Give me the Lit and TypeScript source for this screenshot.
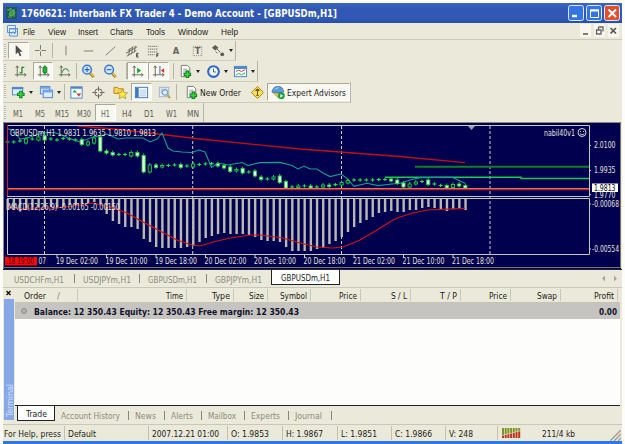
import { LitElement, html, svg, css } from "lit";
import { customElement, property } from "lit/decorators.js";
import { classMap } from "lit/directives/class-map.js";

/** Text squeezed to a given width, like the bitmap fonts of the old desktop */
const label = (text: string, width: number, cls = "") => html`
  <svg class="label ${cls}" width=${width} height="12">
    <text x="0" y="9.5" textLength=${width} lengthAdjust="spacingAndGlyphs">${text}</text>
  </svg>
`;

const labelStyles = css`
  .label {
    display: block;
    flex: none;
    overflow: visible;
    font: 9px "DejaVu Sans Condensed", "DejaVu Sans", sans-serif;
    fill: #1c1c18;
  }
  .label.bold {
    font-weight: bold;
    fill: #101028;
  }
  .label.dim {
    fill: #8b8b80;
  }
  .label.period {
    font-size: 8.5px;
    fill: #5c5c54;
  }
`;

const plus = (x: number, y: number) => svg`
  <path d="M${x - 4} ${y}H${x + 4}M${x} ${y - 4}V${y + 4}" stroke="#0a7a14" stroke-width="3.6" />
  <path d="M${x - 3} ${y}H${x + 3}M${x} ${y - 3}V${y + 3}" stroke="#35d63c" stroke-width="1.8" />`;

const axes = svg`<path d="M4.5 2V13.5M2 11.500H14" stroke="#66665e" />
  <path d="M3 4L4.500 2L6 4M12 10L14 11.500L12 13" fill="none" stroke="#66665e" />`;

const sheet = svg`<path d="M3.500 1.500H10L12.500 4V13.500H3.500Z" fill="#fff" stroke="#777" />
  <path d="M5.500 5.500H10M5.500 7.500H10M5.500 9.500H9" stroke="#999" />`;

const lens = (sign: unknown) => svg`
  <path d="M9.500 9.500L13.500 14" stroke="#a97a10" stroke-width="3" />
  <path d="M10 9.500L13.500 13.500" stroke="#f2cf52" stroke-width="1.4" />
  <circle cx="6.500" cy="6" r="4.600" fill="#cfe6ff" stroke="#3d7bd0" stroke-width="1.600" />${sign}`;

const icons: Record<string, unknown> = {
  cursor: svg`<path d="M5 2V12L7.500 9.800L9.300 14L11 13.200L9.200 9.300H12.300Z" fill="#4c4c48" />`,
  cross: svg`<path d="M8 2V7M8 9V14M2 8H7M9 8H14" stroke="#77776c" />`,
  vline: svg`<path d="M8.500 3V13" stroke="#77776c" />`,
  hline: svg`<path d="M3 8.500H13" stroke="#77776c" />`,
  trend: svg`<path d="M3 13L13 4" stroke="#77776c" />`,
  channel: svg`<path d="M1 11L13 4M2 14L12 8M3 8L9 4M5 6L4 13M8 4L7 12M11 3L10 10" stroke="#66665c" />
    <path d="M14.500 11H12.500V15H14.500M12.500 13H14" stroke="#333" fill="none" />`,
  fibo: svg`<path d="M2 3.500H13M2 6.500H13M2 9.500H13M2 12.500H9" stroke="#77776c" stroke-dasharray="1.500 .6" />
    <path d="M13.500 11.500H11.500V15M11.500 13H13" stroke="#333" fill="none" />`,
  text: svg`<text x="5" y="12" class="glyph">A</text>`,
  textLabel: svg`<rect x="3.500" y="3.500" width="9" height="10" fill="none" stroke="#888" stroke-dasharray="1 1" />
    <text x="5" y="12" class="glyph">T</text>`,
  shapes: svg`<path d="M1 5L4.500 2L8 5L4.500 8Z" fill="#5c5c54" /><circle cx="12" cy="12" r="2" fill="#5c5c54" />
    <path d="M6 6L10 10M7 11L5 9" stroke="#5c5c54" />`,
  bars: svg`${axes}<path d="M9.500 3V10M9.500 3.500H12M7 9.500H9.500" stroke="#17882a" stroke-width="1.300" />`,
  candles: svg`${axes}<path d="M9.500 1V12" stroke="#17882a" />
    <rect x="7.500" y="3" width="4" height="6.500" rx="1" fill="#22b53a" stroke="#0e7520" />`,
  line: svg`${axes}<path d="M5 10Q8 1 13 8" stroke="#5c9a68" fill="none" stroke-width="1.200" />`,
  zoomIn: lens(svg`<path d="M4 6H9M6.500 3.500V8.500" stroke="#2c65bd" stroke-width="1.200" />`),
  zoomOut: lens(svg`<path d="M4 6H9" stroke="#2c65bd" stroke-width="1.200" />`),
  scroll: svg`${axes}<path d="M7.500 4L12 7L7.500 10Z" fill="#1fa534" />`,
  shift: svg`${axes}<path d="M9.500 2V11" stroke="#3a5cae" />
    <path d="M14 4.500L10.500 7L14 9.500Z" fill="#cf3c2c" />`,
  indicator: svg`${sheet}${plus(10, 11)}`,
  clock: svg`<circle cx="8" cy="8" r="6.800" fill="#2e69c8" /><circle cx="8" cy="8" r="4.600" fill="#eef6ff" />
    <path d="M8 5V8.500H10.500" stroke="#555" fill="none" />`,
  template: svg`<rect x="1.500" y="2.500" width="13" height="11" fill="#f4faff" stroke="#4c84cc" />
    <path d="M1 4H15" stroke="#4c84cc" stroke-width="2.500" />
    <path d="M3 8L6 6.500L9 8L13 6" stroke="#c44" fill="none" /><path d="M3 12L6 10L9 11.500L13 9.500" stroke="#2a4" fill="none" />`,
  newChart: svg`<rect x="1.500" y="2.500" width="11" height="8" fill="#dcecff" stroke="#4c84cc" />
    <path d="M1 3.500H13" stroke="#4c84cc" stroke-width="2" />${plus(10.5, 10)}`,
  profiles: svg`<rect x="1.500" y="1.500" width="10" height="8" fill="#dcecff" stroke="#4c84cc" />
    <rect x="4.500" y="5.500" width="10" height="8" fill="#dcecff" stroke="#4c84cc" />
    <path d="M1 3H12M4 7H15" stroke="#76a3df" stroke-width="2" />`,
  market: svg`<rect x="2" y="2" width="12" height="12" fill="#f4faff" stroke="#4c84cc" />
    <path d="M2 3H14" stroke="#4c84cc" stroke-width="2" />
    <path d="M4 8L6 5L8.500 8Z" fill="#1fa534" /><path d="M8 9H13L10.500 12.500Z" fill="#d33c2a" />`,
  target: svg`<circle cx="8" cy="8" r="4" fill="none" stroke="#66665c" /><path d="M8 1.500V6.500M8 9.500V14.500M1.500 8H6.500M9.500 8H14.500" stroke="#66665c" />`,
  navigator: svg`<path d="M1 2.500H5L6 4H11V9H1Z" fill="#f6d55c" stroke="#b38a1e" />
    <path d="M10 4.500L11.700 8L15.500 8.300L12.700 10.800L13.600 14.500L10 12.600L6.600 14.500L7.400 10.800L4.700 8.300L8.500 8Z" fill="#fce94a" stroke="#b38a1e" stroke-width=".8" />`,
  terminal: svg`<rect x="1.500" y="2.500" width="13" height="11" fill="#f6faff" stroke="#3c78ca" />
    <path d="M3.500 3V13" stroke="#3c78ca" stroke-width="3" /><path d="M6 5.500H13M6 7.500H13M6 9.500H13M6 11.500H13" stroke="#9cbce4" stroke-width=".8" />`,
  tester: svg`<rect x="2.500" y="2.500" width="10" height="10" fill="#e8f0f8" stroke="#9cb4d0" />
    <path d="M4 4.500H11M4 6.500H7M4 8.500H6" stroke="#9cb4d0" />
    <circle cx="8.500" cy="8" r="3" fill="#d6ecff" stroke="#5c86b8" /><path d="M11 10.500L14 14" stroke="#c19a30" stroke-width="1.800" />`,
  order: svg`${sheet}${plus(10, 11)}`,
  editor: svg`<path d="M8 1.500L14.500 8L8 14.500L1.500 8Z" fill="#fbe05a" stroke="#a8841c" />
    <path d="M6 6H10L8 4ZM8 5V11M6.500 11H9.500" fill="#6b5410" stroke="#6b5410" />`,
  expert: svg`<path d="M2 8L7 13L12 12L11 7Z" fill="#edc94c" stroke="#a98518" stroke-width=".8" />
    <path d="M1 7.500Q2 1.500 7.500 1.500Q13 1.500 13.500 7.500Q7 9.500 1 7.500Z" fill="#5c9ade" stroke="#356cac" stroke-width=".8" />
    <path d="M4 5Q5 3 8 3" stroke="#c3e0fa" fill="none" />
    <circle cx="11" cy="11.500" r="3.700" fill="#1da238" /><path d="M10 9.500L13 11.500L10 13.500Z" fill="#fff" />`,
};

interface Tool {
  icon?: string;
  width: number;
  pressed?: boolean;
  menu?: boolean;
  sep?: boolean;
  text?: string;
  textWidth?: number;
}

@customElement("tool-row")
export class ToolRow extends LitElement {
  @property({ attribute: false }) tools: Tool[] = [];

  static styles = [
    labelStyles,
    css`
      :host {
        display: flex;
        align-items: stretch;
        box-sizing: border-box;
        width: max-content;
        height: 100%;
        padding: 1px 0;
        border-right: 1px solid #b7b5a5;
        border-bottom: 1px solid #cfccba;
      }
      .grip {
        width: 2px;
        margin: 2px 2px 2px 1px;
        background: repeating-linear-gradient(#b4b2a4 0 1px, #f8f6ea 1px 2px);
      }
      .tool {
        display: flex;
        align-items: center;
        justify-content: center;
        box-sizing: border-box;
        gap: 1px;
      }
      .pressed {
        background: #f8f7f0;
        border: 1px solid;
        border-color: #aaa89a #fff #fff #aaa89a;
      }
      .sep {
        width: 1px;
        margin: 1px 0;
        background: #b7b5a5;
      }
      .icon {
        flex: none;
        fill: none;
      }
      .glyph {
        font: bold 10px "DejaVu Sans Condensed", sans-serif;
        fill: #66665e;
      }
      .menu {
        width: 0;
        margin-left: 2px;
        border: 2px solid transparent;
        border-top: 3px solid #222;
        border-bottom: 0;
      }
    `,
  ];

  renderTool(tool: Tool) {
    if (tool.sep) {
      return html`<div class="sep"></div>`;
    }
    return html`
      <div class=${classMap({ tool: true, pressed: !!tool.pressed })} style="width:${tool.width}px">
        ${tool.icon
          ? html`<svg class="icon" width="15" height="15" viewBox="0 0 16 16">${icons[tool.icon]}</svg>`
          : ""}
        ${tool.text ? label(tool.text, tool.textWidth ?? 12, tool.icon ? "" : "period") : ""}
        ${tool.menu ? html`<div class="menu"></div>` : ""}
      </div>
    `;
  }

  render() {
    return html`<div class="grip"></div>${this.tools.map((tool) => this.renderTool(tool))}`;
  }
}

const SEP: Tool = { sep: true, width: 1 };

const lineTools: Tool[] = [
  { icon: "cursor", width: 21, pressed: true },
  { icon: "cross", width: 23 },
  SEP,
  { icon: "vline", width: 24 },
  { icon: "hline", width: 22 },
  { icon: "trend", width: 22 },
  { icon: "channel", width: 22 },
  { icon: "fibo", width: 21 },
  { icon: "text", width: 22 },
  { icon: "textLabel", width: 22 },
  { icon: "shapes", width: 27, menu: true },
];

const chartTools: Tool[] = [
  { icon: "bars", width: 25 },
  { icon: "candles", width: 20, pressed: true },
  { icon: "line", width: 23 },
  SEP,
  { icon: "zoomIn", width: 23 },
  { icon: "zoomOut", width: 21 },
  { width: 5 },
  SEP,
  { icon: "scroll", width: 21, pressed: true },
  { icon: "shift", width: 21, pressed: true },
  { width: 4 },
  SEP,
  { icon: "indicator", width: 29, menu: true },
  { icon: "clock", width: 27, menu: true },
  { icon: "template", width: 27, menu: true },
];

const standardTools: Tool[] = [
  { icon: "newChart", width: 27, menu: true },
  { icon: "profiles", width: 29, menu: true },
  SEP,
  { icon: "market", width: 23 },
  { icon: "target", width: 21 },
  { icon: "navigator", width: 22 },
  { icon: "terminal", width: 21, pressed: true },
  { icon: "tester", width: 24 },
  SEP,
  { icon: "order", width: 70, text: "New Order", textWidth: 41 },
  { icon: "editor", width: 20 },
  { icon: "expert", width: 83, text: "Expert Advisors", textWidth: 59, pressed: true },
];

const periods: Tool[] = [
  { text: "M1", width: 20, textWidth: 10 },
  { text: "M5", width: 23, textWidth: 10 },
  { text: "M15", width: 22, textWidth: 14 },
  { text: "M30", width: 22, textWidth: 14 },
  { text: "H1", width: 21, textWidth: 9, pressed: true },
  { text: "H4", width: 22, textWidth: 10 },
  { text: "D1", width: 22, textWidth: 10 },
  { text: "W1", width: 22, textWidth: 11 },
  { text: "MN", width: 21, textWidth: 12 },
];

const STEP = 6.187;
const barX = (i: number) => 7.5 + STEP * i;

// lower ends of the MACD bars
const macd = [
  210, 210, 211.5, 210, 209, 208, 209, 207, 208, 207, 205, 205, 204, 203, 202, 204, 214, 221, 224, 227, 227, 229,
  239, 242, 247, 248, 248, 248, 248, 247, 246, 242, 238, 236, 234, 233, 234, 234, 234, 235, 237, 240, 241, 241, 242,
  247, 251, 251, 251, 251, 249, 248, 244, 241, 237, 232, 227, 223, 220, 217, 213, 212, 211, 212, 212, 210, 210, 208,
  207, 208, 209, 211, 209, 209, 210,
];

const signal =
  "7,207 20,209 33,208 57,208 73,206 93,203 110,207 127,213 143,222 160,231 177,240 192,245 200,246 213,242 230,238 250,235 260,235 283,238 300,243 317,247 333,248 343,247 360,240 377,230 393,220 400,217 413,213 427,210 443,209.300 465,208.300";
const average = "78,126 120,129.500 200,139 300,149 400,156.500 465,162.600";
const ribbon =
  "8,129 13,130 20,139 27,138 33,136 43,132.700 55,132.700 62,135 68,138 80,142 93,137 100,136 107,134 118,139 125,138 143,138 150,142 157,139 162,133 168,148 173,151 182,152 192,152.500 199,150 205,152 211.500,167.500 218,163 228,165 242,162.500 248,165.500 260,162.600 280,162.400 292,165.500 298,169 304,166 310,169 317,169 323,173 330,176.600 341,174 347,178.300 354,186.300 367,183.300 378,185.600 392,184 400,183.300 410,180 420,177.600 452,177.300 465,183.300";

// kind: f = filled, o = hollow, d = doji; then top and bottom of the body
const candles: [string, number, number][] = [
  ["d", 142, 142], ["d", 142, 142], ["d", 141, 141], ["o", 139, 143], ["d", 139, 139], ["o", 137, 140],
  ["f", 136, 140], ["d", 139, 139], ["d", 140, 140], ["d", 138.5, 138.5], ["d", 139, 139], ["d", 140, 140],
  ["f", 139.5, 144.5], ["o", 142, 145], ["o", 138, 143], ["f", 137, 151], ["f", 151, 153], ["f", 152.5, 155],
  ["d", 154.5, 154.5], ["d", 154.5, 154.5], ["o", 152.5, 156], ["f", 152.5, 156], ["f", 155.5, 172], ["o", 165, 172],
  ["f", 165, 167.5], ["o", 165.5, 167], ["d", 165.5, 165.5], ["d", 165, 165], ["f", 164.5, 167.5], ["d", 166, 166],
  ["o", 164, 167], ["d", 164.5, 164.5], ["d", 164, 164], ["d", 163.7, 163.7], ["f", 163.5, 166], ["f", 165.5, 168],
  ["f", 167, 171.5], ["o", 169.5, 171], ["f", 168.5, 173], ["d", 172, 172], ["f", 171, 176], ["f", 177, 179.5],
  ["d", 179, 179], ["o", 177, 179], ["f", 176, 182.5], ["f", 181.5, 188], ["d", 187, 187], ["o", 186, 187.5],
  ["d", 186, 186], ["f", 186, 188], ["d", 187, 187], ["o", 185, 187], ["f", 185, 186.5], ["d", 184.7, 184.7],
  ["o", 182.5, 185], ["o", 180.5, 183], ["d", 180, 180], ["d", 180, 180], ["d", 180, 180], ["d", 180, 180],
  ["d", 179.7, 179.7], ["d", 179.5, 179.5], ["f", 179, 181], ["f", 180, 183.5], ["f", 183, 187], ["o", 184, 187],
  ["o", 182, 184], ["d", 181.5, 181.5], ["f", 180, 184.5], ["d", 184, 184], ["d", 185.5, 185.5], ["f", 185.5, 188],
  ["o", 184.5, 187.5], ["f", 184, 186], ["f", 185.5, 188],
];

const dates = [
  "19 Dec 02:00", "19 Dec 10:00", "19 Dec 18:00", "20 Dec 02:00", "20 Dec 10:00",
  "20 Dec 18:00", "21 Dec 02:00", "21 Dec 10:00", "21 Dec 18:00",
];

@customElement("price-chart")
export class PriceChart extends LitElement {
  static styles = css`
    :host {
      display: block;
      height: 147px;
      margin-right: 1px;
      background: #00004e;
    }
    .canvas {
      display: block;
      font: 8px "DejaVu Sans Condensed", sans-serif;
    }
    .frame {
      fill: none;
      stroke: #c8c8be;
    }
  `;

  renderCandle(kind: string, top: number, bottom: number, i: number) {
    const x = barX(i);
    if (kind === "d") {
      return svg`<path d="M${x - 2} ${top}H${x + 2}M${x} ${top - 1.8}V${top + 1.5}" stroke="#1ee04a" stroke-width="1.2" />`;
    }
    return svg`
      <path d="M${x} ${top - 2}V${bottom + 1.5}" stroke="#19d040" />
      <rect x=${x - 1.6} y=${top} width="3.2" height=${bottom - top}
        fill=${kind === "f" ? "#f0ffe8" : "#00004e"} stroke="#19d040" stroke-width=".9" />`;
  }

  renderText(text: string, x: number, y: number, width: number, fill = "#e4e4dc") {
    return svg`<text x=${x} y=${y} fill=${fill} textLength=${width} lengthAdjust="spacingAndGlyphs">${text}</text>`;
  }

  render() {
    return html`
      <svg class="canvas" width="618" height="147" viewBox="3 122 618 147">
        <path d="M3 122.500H621M3.500 122V269" stroke="#8d8b80" />
        <path d="M620.500 122V268M3 267.500H621" stroke="#77776e" />
        ${[44.5, 192.7, 341.5, 490].map(
          (x) => svg`<path d="M${x} 126V254" stroke="#d0d0c8" stroke-dasharray="3 2" />`
        )}
        ${macd.map((y, i) => svg`<rect x=${barX(i) - 1} y="199" width="2.4" height=${y - 199} fill="#b9b9b4" />`)}
        <polyline points=${signal} fill="none" stroke="#d01414" stroke-width="1.2" />
        <polyline points=${average} fill="none" stroke="#c01010" stroke-width="1.3" />
        <path d="M415 166.700H589" stroke="#12801c" stroke-width="2" />
        <path d="M385 177.300H521V178.500H589" fill="none" stroke="#20c84c" stroke-width="1.4" />
        <polyline points=${ribbon} fill="none" stroke="#18a08c" stroke-width="1.1" />
        ${candles.map(([kind, top, bottom], i) => this.renderCandle(kind, top, bottom, i))}
        <path d="M7 188.500H589" stroke="#b88068" />
        <path d="M7 189.600H589" stroke="#d81818" stroke-width="1.2" />
        <path class="frame" d="M7 125.500H589.500V196.500H7M7 198.500H589.500V254.500H7.500V198" />
        <path d="M7.500 125V196" stroke="#d02020" />
        <path d="M468 126H475L471.500 130Z" fill="#9aa4b8" />
        ${this.renderText("GBPUSDm,H1  1.9831 1.9635 1.9810 1.9813", 10, 135.5, 146)}
        ${this.renderText("MACD(12,26,9) -0.00165 -0.00150", 8, 209.5, 112)}
        ${this.renderText("nabil40v1", 544, 135.5, 31)}
        <circle cx="582" cy="132.500" r="4" fill="none" stroke="#deded6" />
        <path d="M580.500 131V132M583.500 131V132M579.800 133.800Q582 136 584.200 133.800" fill="none" stroke="#deded6" stroke-width=".9" />
        ${[145.5, 170.5, 194.5, 204, 249].map((y) => svg`<path d="M589 ${y}H591" stroke="#c8c8be" />`)}
        ${this.renderText("2.0100", 594, 148, 21.5)}
        ${this.renderText("1.9935", 594, 173, 21.5)}
        ${this.renderText("1.9770", 594, 198, 21.5)}
        <rect x="592" y="183.500" width="26" height="8.500" fill="#fff" />
        ${this.renderText("1.9813", 594, 190.6, 21.5, "#000")}
        ${this.renderText("-0.00068", 592, 207, 27)}
        ${this.renderText("-0.00554", 592, 252, 27)}
        ${dates.map(
          (date, i) => svg`
            <path d="M${57 + i * 49.5} 254V257.500" stroke="#c8c8be" />
            ${this.renderText(date, 56 + i * 49.5, 264.2, 42)}`
        )}
        ${this.renderText("07", 38.5, 264.2, 7.5)}
        <rect x="5" y="257" width="32" height="8.500" fill="#f80808" />
        ${this.renderText(".18 19:00", 6, 264.2, 28, "#500000")}
      </svg>
    `;
  }
}

const menus: [string, number, number][] = [
  ["File", 12, 25], ["View", 18, 30], ["Insert", 20, 32], ["Charts", 23, 36],
  ["Tools", 19, 32], ["Window", 30, 43], ["Help", 17, 25],
];

const chartTabs: [string, number, number][] = [
  ["USDCHFm,H1", 50, 69], ["USDJPYm,H1", 48, 65], ["GBPUSDm,H1", 49, 67], ["GBPJPYm,H1", 47, 65],
];

const columns: [string, number][] = [
  ["Order", 22], ["Time", 17], ["Type", 18], ["Size", 15], ["Symbol", 27], ["Price", 18],
  ["S / L", 16], ["T / P", 17], ["Price", 18], ["Swap", 20], ["Profit", 20],
];

const terminalTabs: [string, number, number][] = [
  ["Account History", 59, 74], ["News", 21, 36], ["Alerts", 22, 37], ["Mailbox", 28, 43],
  ["Experts", 29, 44], ["Journal", 27, 43],
];

const statusCells: [string, number, number][] = [
  ["For Help, press", 57, 61], ["Default", 28, 84], ["2007.12.21 01:00", 67, 79], ["O: 1.9853", 38, 55],
  ["H: 1.9867", 37, 55], ["L: 1.9851", 36, 54], ["C: 1.9866", 37, 54], ["V: 248", 24, 52],
];

@customElement("app-root")
export class AppRoot extends LitElement {
  static styles = [
    labelStyles,
    css`
      :host {
        display: block;
        box-sizing: border-box;
        width: 625px;
        height: 444px;
        padding: 3px 3px 0;
        overflow: hidden;
        background: #fcfcf8;
      }
      .window {
        display: flex;
        flex-direction: column;
        height: 441px;
        background: #ebe9d9;
      }
      .title {
        display: flex;
        align-items: center;
        flex: none;
        height: 20px;
        padding: 0 2px 0 3px;
        background: linear-gradient(#3b66c4, #3058b4 30%, #3058b4 80%, #2450a8);
      }
      .title .label {
        margin: 0 auto 0 4px;
        font-size: 10.5px;
        font-weight: bold;
        fill: #fff;
      }
      .caption {
        display: block;
        margin-left: 2px;
      }
      .menubar {
        display: flex;
        align-items: center;
        flex: none;
        box-sizing: border-box;
        height: 17px;
        padding: 0 2px 0 4px;
        border-bottom: 1px solid #cbc9b9;
      }
      .menubar .label {
        font-family: "Liberation Sans", sans-serif;
        font-size: 9.5px;
      }
      .doc {
        margin-right: 5px;
      }
      .mdi {
        margin-left: auto;
      }
      .bars {
        display: grid;
        grid-template-rows: 20px 21px 21px 20px;
        flex: none;
        padding-top: 1px;
        height: 81px;
      }
      .tabs {
        display: flex;
        align-items: center;
        flex: none;
        height: 18px;
        padding-left: 3px;
        border-top: 1px solid #22222c;
        box-sizing: border-box;
      }
      .tab {
        display: flex;
        align-items: center;
        box-sizing: border-box;
        height: 9px;
        padding-left: 8px;
        border-right: 1px solid #85857a;
      }
      .tab.last {
        border-right-color: transparent;
      }
      .active {
        display: flex;
        align-items: center;
        justify-content: center;
        box-sizing: border-box;
        width: 69px;
        height: 15px;
        margin: -3px 0 0 -1px;
        background: #fff;
        border: 1px solid #222;
        border-top: 0;
      }
      .arrows {
        margin: 0 3px 0 auto;
      }
      .terminal {
        display: flex;
        flex: none;
        height: 137px;
        border-top: 1px solid #c9c7b8;
        box-sizing: border-box;
      }
      .side {
        display: flex;
        flex-direction: column;
        width: 12px;
      }
      .close {
        display: block;
        margin: 1px 0 0 2px;
      }
      .handle {
        flex: 1;
        width: 10px;
        margin: 1px 0 4px 1px;
        background: #86a8e6;
      }
      .side-text {
        font: 9px "DejaVu Sans Condensed", sans-serif;
        fill: #d4e0f8;
      }
      .content {
        flex: 1;
        display: flex;
        flex-direction: column;
        margin-right: 2px;
      }
      .head {
        display: grid;
        grid-template-columns: 63px 109px 47px 34px 43px 50px 50px 50px 50px 50px 57px;
        height: 15px;
        border-bottom: 1px solid #c5c3b4;
        box-sizing: border-box;
      }
      .col {
        display: flex;
        align-items: center;
        justify-content: flex-end;
        margin: 1px 0;
        padding-right: 3px;
        border-right: 1px solid #c9c7b6;
      }
      .col:first-child {
        justify-content: flex-start;
        gap: 11px;
        padding-left: 9px;
      }
      .balance {
        display: flex;
        align-items: center;
        height: 16px;
        padding: 0 3px 0 6px;
        background: #c6c4c0;
      }
      .dot {
        box-sizing: border-box;
        width: 6px;
        height: 6px;
        margin-right: 7px;
        border: 1px solid #8c8c84;
        border-radius: 50%;
        background: #b4b4aa;
      }
      .profit {
        margin-left: auto;
      }
      .empty {
        flex: 1;
        background: #fdfdfb;
        border-bottom: 1px solid #222;
      }
      .sheets {
        display: flex;
        align-items: center;
        height: 18px;
        padding-left: 3px;
      }
      .sheets .active {
        width: 38px;
        margin-top: -4px;
      }
      .sheets .tab {
        padding-left: 6px;
      }
      .status {
        display: flex;
        align-items: center;
        flex: none;
        height: 16px;
        padding-left: 1px;
        border-top: 1px solid #c9c7b8;
      }
      .cell {
        display: flex;
        align-items: center;
        box-sizing: border-box;
        height: 14px;
        padding-left: 3px;
        border-right: 1px solid #c2c0b0;
      }
      .cell:first-child {
        padding-left: 0;
      }
      .signal {
        margin: 0 21px 0 4px;
      }
      .resize {
        margin: 4px 1px 0 auto;
      }
      .desktop {
        flex: 1;
        background: #2c78e4;
      }
    `,
  ];

  renderTitle() {
    return html`
      <div class="title">
        <svg width="11" height="12">
          <rect width="11" height="12" fill="#1f5a50" />
          <path d="M1 3H5V1M4 5L7 3L9 6L6 9L3 8ZM8 2V10M2 10H6" fill="#3c9a48" stroke="#58b060" />
        </svg>
        ${label("1760621: Interbank FX Trader 4 - Demo Account - [GBPUSDm,H1]", 316)}
        ${[
          ["#3474e4", svg`<path d="M4 11H9" stroke-width="2.4" />`],
          ["#3474e4", svg`<path d="M4.500 5H12.500V12.500H4.500Z" /><path d="M4 5.500H13" stroke-width="2" />`],
          ["#e0502c", svg`<path d="M4.500 4.500L12 12M12 4.500L4.500 12" stroke-width="2" />`],
        ].map(
          ([fill, mark]) => html`
            <svg class="caption" width="16" height="16">
              <rect x=".5" y=".5" width="15" height="15" rx="2" fill=${fill} stroke="#dce8fc" />
              <g fill="none" stroke="#fff">${mark}</g>
            </svg>
          `
        )}
      </div>
    `;
  }

  renderMenu() {
    return html`
      <div class="menubar">
        <svg class="doc" width="11" height="12" fill="#e4f0ff" stroke="#5c92da">
          <path d="M.5 .5H8.500V7.500H.5ZM2.500 3.500H10.500V11H2.500Z" />
          <path d="M2 4H11M4 9L6 6.500L7.500 9L9.500 6.500" fill="none" />
        </svg>
        ${menus.map(([text, width, cell]) => html`<div style="width:${cell}px">${label(text, width)}</div>`)}
        <svg class="mdi" width="40" height="14">
          <path d="M0 0H11V13H0ZM14 0H25V13H14ZM28 0H39V13H28Z" fill="#f7f6ef" />
          <path d="M3 10H8" stroke="#55554e" stroke-width="1.500" />
          <path d="M18.500 3H23V7.500M16.500 6H21V10H16.500ZM18.500 3V6" fill="none" stroke="#66665c" stroke-width="1.300" />
          <path d="M30.500 4L36 9.500M36 4L30.500 9.500" stroke="#55554e" stroke-width="1.700" />
        </svg>
      </div>
    `;
  }

  renderTerminal() {
    return html`
      <div class="terminal">
        <div class="side">
          <svg class="close" width="8" height="9">
            <path d="M1.500 2L5.500 6M5.500 2L1.500 6" stroke="#111" stroke-width="1.400" />
          </svg>
          <svg class="handle" width="10" height="120">
            <text class="side-text" transform="translate(8.500 118) rotate(-90)" textLength="33">Terminal</text>
          </svg>
        </div>
        <div class="content">
          <div class="head">
            ${columns.map(
              ([text, width], i) => html`<div class="col">${label(text, width)}${i === 0 ? label("/", 3, "dim") : ""}</div>`
            )}
          </div>
          <div class="balance">
            <div class="dot"></div>
            ${label("Balance: 12 350.43  Equity: 12 350.43  Free margin: 12 350.43", 265, "bold")}
            <div class="profit">${label("0.00", 18, "bold")}</div>
          </div>
          <div class="empty"></div>
          <div class="sheets">
            <div class="active">${label("Trade", 21)}</div>
            ${terminalTabs.map(
              ([text, width, cell]) => html`<div class="tab" style="width:${cell}px">${label(text, width, "dim")}</div>`
            )}
          </div>
        </div>
      </div>
    `;
  }

  renderStatus() {
    return html`
      <div class="status">
        ${statusCells.map(
          ([text, width, cell]) => html`<div class="cell" style="width:${cell}px">${label(text, width)}</div>`
        )}
        <svg class="signal" width="19" height="10">
          ${[0, 1, 2, 3, 4, 5, 6].map(
            (i) => svg`
              <rect x=${i * 2.7} y="0" width="2" height=${7 - i * 0.7} fill="#7d9426" />
              <rect x=${i * 2.7} y=${7.6 - i * 0.7} width="2" height=${2.4 + i * 0.7} fill="#bc3420" />`
          )}
        </svg>
        ${label("211/4 kb", 33)}
        <svg class="resize" width="11" height="11">
          <path d="M0 11L11 0M4 11L11 4M8 11L11 8" stroke="#a5a394" stroke-width="1.500" />
        </svg>
      </div>
    `;
  }

  render() {
    return html`
      <div class="window">
        ${this.renderTitle()} ${this.renderMenu()}
        <div class="bars">
          <tool-row .tools=${lineTools}></tool-row>
          <tool-row .tools=${chartTools}></tool-row>
          <tool-row .tools=${standardTools}></tool-row>
          <tool-row .tools=${periods}></tool-row>
        </div>
        <price-chart></price-chart>
        <div class="tabs">
          ${chartTabs.map(
            ([text, width, cell], i) => html`
              <div class=${classMap({ tab: true, last: i === chartTabs.length - 1 })} style="width:${cell}px">
                ${label(text, width, "dim")}
              </div>
            `
          )}
          <div class="active">${label("GBPUSDm,H1", 49)}</div>
          <svg class="arrows" width="18" height="7" fill="#a8a69a">
            <path d="M4 .5V6.500L1 3.500ZM13 .5V6.500L16 3.500Z" />
          </svg>
        </div>
        ${this.renderTerminal()} ${this.renderStatus()}
        <div class="desktop"></div>
      </div>
    `;
  }
}
